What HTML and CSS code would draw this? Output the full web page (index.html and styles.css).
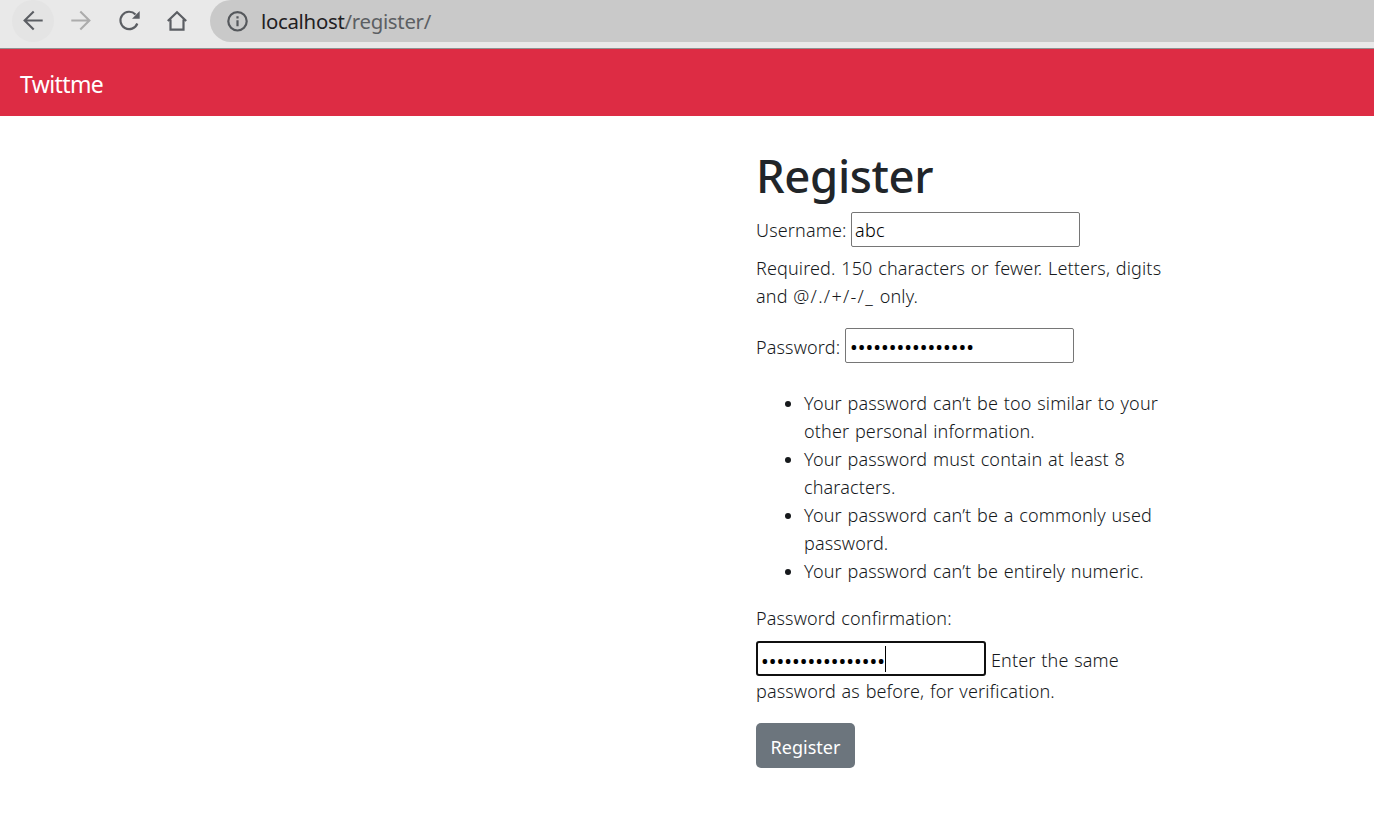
FILE: index.html
```html
<!DOCTYPE html>
<html lang="en">
<head>
    <meta charset="UTF-8">
    <meta name="viewport" content="width=device-width, initial-scale=1.0">
    <title>Register</title>
    <link rel="stylesheet" href="styles.css">
</head>
<body>
    <div class="toolbar">
        <div class="tool-btn active">
            <svg width="24" height="24" viewBox="0 0 24 24" fill="none" stroke="#5b5e63" stroke-width="2.1"><path d="M21.7 11.500H3.500M12.700 2.500L3.600 11.500L12.700 20.500"/></svg>
        </div>
        <div class="tool-btn">
            <svg width="24" height="24" viewBox="0 0 24 24" fill="none" stroke="#acacac" stroke-width="2.1"><path d="M2.300 11.500H20.500M11.300 2.500L20.400 11.500L11.300 20.500"/></svg>
        </div>
        <div class="tool-btn">
            <svg width="24" height="24" viewBox="0 0 24 24" fill="none" stroke="#5b5e63" stroke-width="2.200"><path d="M20.300 14.500A8.700 8.700 0 1 1 18.500 5.500"/><path d="M22.700 2V9.700H15Z" fill="#5b5e63" stroke="none"/></svg>
        </div>
        <div class="tool-btn">
            <svg width="24" height="24" viewBox="0 0 24 24" fill="none" stroke="#5b5e63" stroke-width="2.200"><path d="M2.800 12L12 3.200L21.200 12M5.500 10.500V20.700H18.500V10.500"/></svg>
        </div>
        <div class="address-bar">
            <svg width="22" height="22" viewBox="0 0 22 22" fill="none" stroke="#55585c" stroke-width="2.200"><circle cx="11.500" cy="11.300" r="9.200"/><path d="M11.500 10.300v6M11.500 6.200v2.300"/></svg>
            <span class="url"><span class="host">localhost</span>/register/</span>
        </div>
    </div>

    <nav class="navbar">
        <a class="brand">Twittme</a>
    </nav>

    <div class="content">
        <h1>Register</h1>
        <form>
            <div class="form-row">
                <label for="username">Username:</label>
                <input type="text" id="username" name="username" value="abc">
            </div>
            <p class="help">Required. 150 characters or fewer. Letters, digits<br>and <span class="symbols">@/./+/-/_</span> only.</p>
            <div class="form-row">
                <label for="password1">Password:</label>
                <input type="password" id="password1" name="password1" value="abcdefgh12345678">
            </div>
            <ul>
                <li>Your password can’t be too similar to your<br>other personal information.</li>
                <li>Your password must contain at least 8<br>characters.</li>
                <li>Your password can’t be a commonly used<br>password.</li>
                <li>Your password can’t be entirely numeric.</li>
            </ul>
            <label class="confirm-label" for="password2">Password confirmation:</label>
            <div class="form-row">
                <span class="focused">
                    <input type="password" id="password2" name="password2" value="abcdefgh12345678">
                    <span class="caret"></span>
                </span>
                <span class="inline-help">Enter the same</span>
            </div>
            <p class="confirm-help">password as before, for verification.</p>
            <button type="submit">Register</button>
        </form>
    </div>
</body>
</html>
```
FILE: styles.css
```css
* {
    box-sizing: border-box;
}
body {
    margin: 0;
    font-family: "Noto Sans", "Open Sans", sans-serif;
    font-size: 18px;
    font-weight: 300;
    line-height: 28px;
    color: #16191c;
    background-color: #fff;
    overflow: hidden;
}
/* browser toolbar */
.toolbar {
    display: flex;
    align-items: flex-start;
    height: 49px;
    padding-left: 12px;
    background-color: #e9e9e9;
    border-bottom: 1px solid #919191;
}
.tool-btn {
    display: flex;
    align-items: center;
    justify-content: center;
    width: 42px;
    height: 42px;
    margin-right: 6px;
    border-radius: 50%;
}
.tool-btn.active {
    background-color: #e4e4e4;
}
.address-bar {
    display: flex;
    align-items: center;
    flex: 1;
    height: 42px;
    margin-left: 6px;
    padding-left: 16px;
    background-color: #c9c9c9;
    border-radius: 21px 0 0 21px;
}
.url {
    margin-left: 13px;
    font-size: 20.4px;
    font-weight: 400;
    letter-spacing: -0.3px;
    color: #5c5f63;
}
.host {
    color: #1f2023;
}
.navbar {
    display: flex;
    align-items: center;
    height: 67px;
    padding: 3px 20px 0;
    background-color: #dd2c44;
}
.brand {
    font-size: 23px;
    font-weight: 400;
    letter-spacing: -0.6px;
    color: #fff;
}
.content {
    width: 430px;
    margin-left: 756px;
    padding-top: 30px;
}
h1 {
    margin: 0;
    height: 66px;
    font-size: 45.5px;
    font-weight: 500;
    line-height: 58px;
    letter-spacing: -0.4px;
    color: #212529;
}
form {
    letter-spacing: 0.14px;
    word-spacing: 0.9px;
    white-space: nowrap;
}
.form-row {
    display: flex;
    align-items: center;
    height: 35px;
}
.form-row label {
    width: 95px;
    padding-top: 1px;
}
.form-row label[for="password1"] {
    width: 89px;
    padding-top: 3px;
}
input {
    width: 229px;
    height: 35px;
    padding: 1px 3px;
    border: 1px solid #767676;
    border-radius: 2px;
    font: inherit;
    letter-spacing: 0.3px;
    color: #000;
    outline: none;
}
input[type="password"] {
    padding: 4px 4px 1px;
    font-size: 20.6px;
    font-weight: 400;
    letter-spacing: 0;
}
.help {
    margin: 7px 0 18px;
}
.symbols {
    letter-spacing: 1.3px;
}
ul {
    margin: 26px 0 19px;
    padding-left: 48px;
}
.confirm-label {
    display: block;
    height: 37px;
}
.focused {
    position: relative;
    display: flex;
    margin-right: 5px;
}
.focused input[type="password"] {
    width: 230px;
    padding: 5px 3px 1px;
    border: 2px solid #101010;
    border-radius: 3px;
}
.caret {
    position: absolute;
    top: 5px;
    left: 129px;
    width: 1px;
    height: 26px;
    background-color: #000;
}
.inline-help {
    padding-top: 2px;
}
.confirm-help {
    margin: 1px 0 18px;
}
button {
    width: 99px;
    height: 45px;
    padding: 3px 0 0;
    border: none;
    border-radius: 5px;
    background-color: #6c757d;
    font: inherit;
    font-weight: 400;
    color: #fff;
}
```
